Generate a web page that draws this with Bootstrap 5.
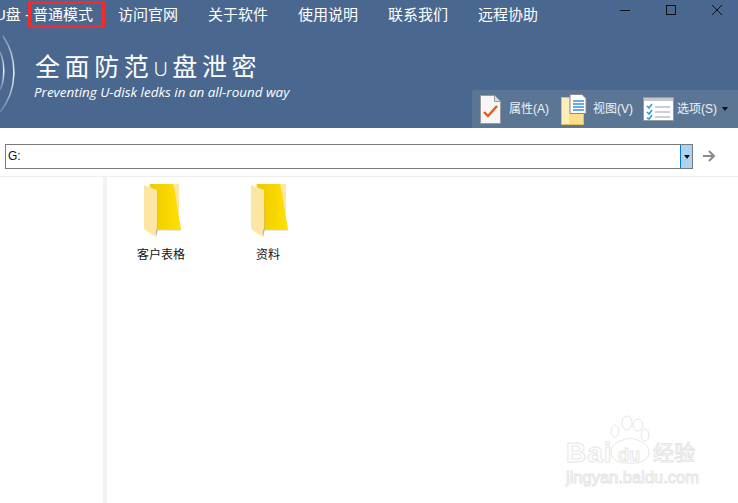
<!DOCTYPE html>
<html lang="zh">

<head>
    <meta charset="UTF-8">
    <title>U盘 - 普通模式</title>
    <link href="https://cdn.jsdelivr.net/npm/bootstrap@5.3.0/dist/css/bootstrap.min.css" rel="stylesheet">
    <style>
        html, body { height: 100%; overflow: hidden; }
        body {
            font-family: "Liberation Sans", "Noto Sans CJK SC", sans-serif;
            background: #fff;
        }
        .app-head { height: 128px; background: #4a688f; color: #fff; position: relative; overflow: hidden; }
        .menu-row { height: 30px; font-size: 15px; line-height: 30px; }
        .menu-row > span { flex: none; }
        .app-name { margin-left: -5px; width: 33px; white-space: nowrap; }
        .mode-box { width: 77px; height: 27px; margin-top: 1px; padding-left: 2px; line-height: 21px; border: 3px solid #f22c2c; }
        .menu-item { width: 60px; margin-right: 30px; }
        .menu-first { margin-left: 13px; }
        .win-btns { position: absolute; top: 0; right: 0; }
        .brand { padding: 22px 0 0 35px; }
        .brand-title { font-size: 25px; line-height: 30px; letter-spacing: 4.6px; white-space: nowrap; }
        .brand-u { font-family: "Noto Sans", sans-serif; font-size: 20px; font-weight: 300; letter-spacing: 4.5px; }
        .brand-sub { font-family: "Open Sans", sans-serif; font-style: italic; font-size: 13.45px; line-height: 16px; margin-left: -1px; }
        .logo-arcs { position: absolute; left: 0; top: 30px; }
        .tool-bar { position: absolute; right: 0; bottom: 0; width: 266px; height: 38px; background: #5b7695; border-radius: 3px 0 0 0; font-size: 12px; color: #eef2f7; }
        .tool-item { position: absolute; top: 0; height: 38px; display: flex; align-items: center; white-space: nowrap; }
        .tool-gap-a { margin-right: 8px; }
        .tool-gap-b { margin-right: 6px; }
        .tool-gap-c { margin-right: 3px; }
        .tool-caret { position: absolute; left: 250px; top: 17px; }
        .addr-row { height: 49px; padding: 16px 0 0 5px; border-bottom: 1px solid #eee; }
        .addr-box { width: 688px; height: 25px; border: 1px solid #7a7a7a; font-size: 12px; color: #111; padding-left: 2px; line-height: 23px; }
        .addr-drop { width: 12px; background: #aed3f1; border-left: 1px solid #0078d7; }
        .main-pane { height: 326px; }
        .side-pane { width: 103px; flex: none; border-right: 4px solid #f2f2f2; box-sizing: content-box; }
        .file-list { padding: 7px 0 0 9px; gap: 17px; }
        .file-tile { width: 90px; font-size: 12px; color: #111; text-align: center; }
        .file-tile svg { display: block; margin: 0 0 8px 28px; }
        .wm { position: absolute; left: 566px; top: 435px; color: transparent; -webkit-text-stroke: 1px #e6e6e6; }
        .wm-bai { position: absolute; left: 0; top: 0; font-size: 28px; line-height: 36px; font-weight: 700; letter-spacing: 1px; }
        .wm-du { position: absolute; left: 52px; top: 10px; font-size: 18px; line-height: 20px; font-weight: 700; }
        .wm-cn { position: absolute; left: 87px; top: 4px; font-size: 21px; line-height: 28px; white-space: nowrap; }
        .wm-url { position: absolute; left: 0; top: 32px; font-size: 16.5px; line-height: 20px; white-space: nowrap; }
        .wm-paw { position: absolute; left: 40px; top: -25px; }
    </style>
</head>

<body>
    <div class="app-head">
        <div class="menu-row d-flex">
            <span class="app-name">U盘 -</span>
            <span class="mode-box">普通模式</span>
            <span class="menu-item menu-first">访问官网</span>
            <span class="menu-item">关于软件</span>
            <span class="menu-item">使用说明</span>
            <span class="menu-item">联系我们</span>
            <span class="menu-item">远程协助</span>
        </div>
        <svg class="win-btns" width="138" height="20" fill="none" stroke="#111" stroke-width="1">
            <path d="M20 10.5h10"/>
            <rect x="66.5" y="5.5" width="9" height="9"/>
            <path d="M112 5l10 10M122 5l-10 10"/>
        </svg>
        <svg class="logo-arcs" width="18" height="84" fill="none" stroke="#dfe6ee" stroke-width="1.5">
            <defs>
                <linearGradient id="arcFade" x1="0" y1="0" x2="0" y2="1">
                    <stop offset="0" stop-color="#dfe6ee" stop-opacity=".35"/>
                    <stop offset=".5" stop-color="#eef2f7"/>
                    <stop offset="1" stop-color="#dfe6ee" stop-opacity=".25"/>
                </linearGradient>
            </defs>
            <path d="M3 6C18 28 18 60 0 82" stroke="url(#arcFade)"/>
            <path d="M0 22C5 32 5 50 0 60" stroke="url(#arcFade)"/>
        </svg>
        <div class="brand">
            <div class="brand-title">全面防范<span class="brand-u">U</span>盘泄密</div>
            <div class="brand-sub">Preventing U-disk ledks in an all-round way</div>
        </div>
        <div class="tool-bar">
            <div class="tool-item" style="left:8px">
                <svg class="tool-gap-a" width="21" height="29">
                    <path d="M.5.5h14l6 6v22H.5z" fill="#f6f6f6" stroke="#9a9a9a"/>
                    <path d="M14.500.5v6h6" fill="#ddd" stroke="#9a9a9a"/>
                    <path d="M4 17l4 4 9-10" fill="none" stroke="#e8591c" stroke-width="2.4"/>
                </svg>
                <span>属性(A)</span>
            </div>
            <div class="tool-item" style="left:89px">
                <svg class="tool-gap-b" width="26" height="31">
                    <path d="M.5 3.500h22v27H.5z" fill="#fbdf8c" stroke="#e3c25e"/>
                    <path d="M1 4h7v26H1z" fill="#fdeeb8"/>
                    <path d="M9 .5h12l4 4v15H9z" fill="#fff" stroke="#8a8a8a"/>
                    <path d="M12 7h11M12 10h11M12 13h11M12 16h11" stroke="#3d8ee0" stroke-width="1.500"/>
                </svg>
                <span>视图(V)</span>
            </div>
            <div class="tool-item" style="left:171px">
                <svg class="tool-gap-c" width="31" height="24">
                    <path d="M.5.5h30v23H.500z" fill="#fff" stroke="#9a9a9a"/>
                    <path d="M1 1h29v3H1z" fill="#c8c8c8"/>
                    <path d="M4 9l2 2 3-4M4 15l2 2 3-4M4 21l2 1 3-4" fill="none" stroke="#2a9ad8" stroke-width="1.500"/>
                    <path d="M12 10h15M12 15h15M12 20h15" stroke="#9a9ab8"/>
                </svg>
                <span>选项(S)</span>
            </div>
            <svg class="tool-caret" width="6" height="4"><path d="M0 0h6L3 4z" fill="#111"/></svg>
        </div>
    </div>

    <div class="addr-row d-flex">
        <div class="addr-box d-flex justify-content-between">
            <span>G:</span>
            <span class="addr-drop d-flex align-items-center justify-content-center">
                <svg width="6" height="4"><path d="M0 0h6L3 4z" fill="#111"/></svg>
            </span>
        </div>
        <svg class="ms-2 mt-1" width="16" height="16" fill="none" stroke="#8a8a8a" stroke-width="2">
            <path d="M2 8h11M8 3l5 5-5 5"/>
        </svg>
    </div>

    <svg width="0" height="0" class="d-block">
        <defs>
            <linearGradient id="folderBody" x1="0" y1="0" x2="1" y2="0">
                <stop offset="0" stop-color="#eec900"/>
                <stop offset="1" stop-color="#ffe100"/>
            </linearGradient>
            <symbol id="folderIcon" viewBox="0 0 38 54">
                <path d="M5 0h30v30H5z" fill="#fde6a0"/>
                <path d="M6 0h23l2 8 2 14 4 23H12z" fill="url(#folderBody)"/>
                <path d="M12 45h25v1.500H12z" fill="#cfcfc8"/>
                <path d="M0 1l13 5v39l-1 1v7L0 45z" fill="#fde6a4"/>
                <path d="M13 6v39l-1 1v7l1.500-6V46z" fill="#b9b39a"/>
            </symbol>
        </defs>
    </svg>

    <div class="main-pane d-flex">
        <div class="side-pane"></div>
        <div class="file-list d-flex">
            <div class="file-tile">
                <svg width="38" height="54"><use href="#folderIcon"/></svg>
                <div>客户表格</div>
            </div>
            <div class="file-tile">
                <svg width="38" height="54"><use href="#folderIcon"/></svg>
                <div>资料</div>
            </div>
        </div>
    </div>

    <div class="wm">
        <svg class="wm-paw" width="46" height="56" fill="#fff" stroke="#e6e6e6">
            <ellipse cx="9" cy="21" rx="4" ry="6"/>
            <ellipse cx="21" cy="13" rx="5" ry="7"/>
            <ellipse cx="32" cy="15" rx="5" ry="6"/>
            <ellipse cx="39" cy="25" rx="4" ry="6"/>
            <path d="M5 42C5 34 14 30 24 28 34 30 43 34 43 42 43 50 34 54 24 53 14 54 5 50 5 42z"/>
        </svg>
        <span class="wm-bai">Bai</span>
        <span class="wm-du">du</span>
        <span class="wm-cn">经验</span>
        <span class="wm-url">jingyan.baidu.com</span>
    </div>

    <script src="https://cdn.jsdelivr.net/npm/bootstrap@5.3.0/dist/js/bootstrap.bundle.min.js"></script>
</body>

</html>
